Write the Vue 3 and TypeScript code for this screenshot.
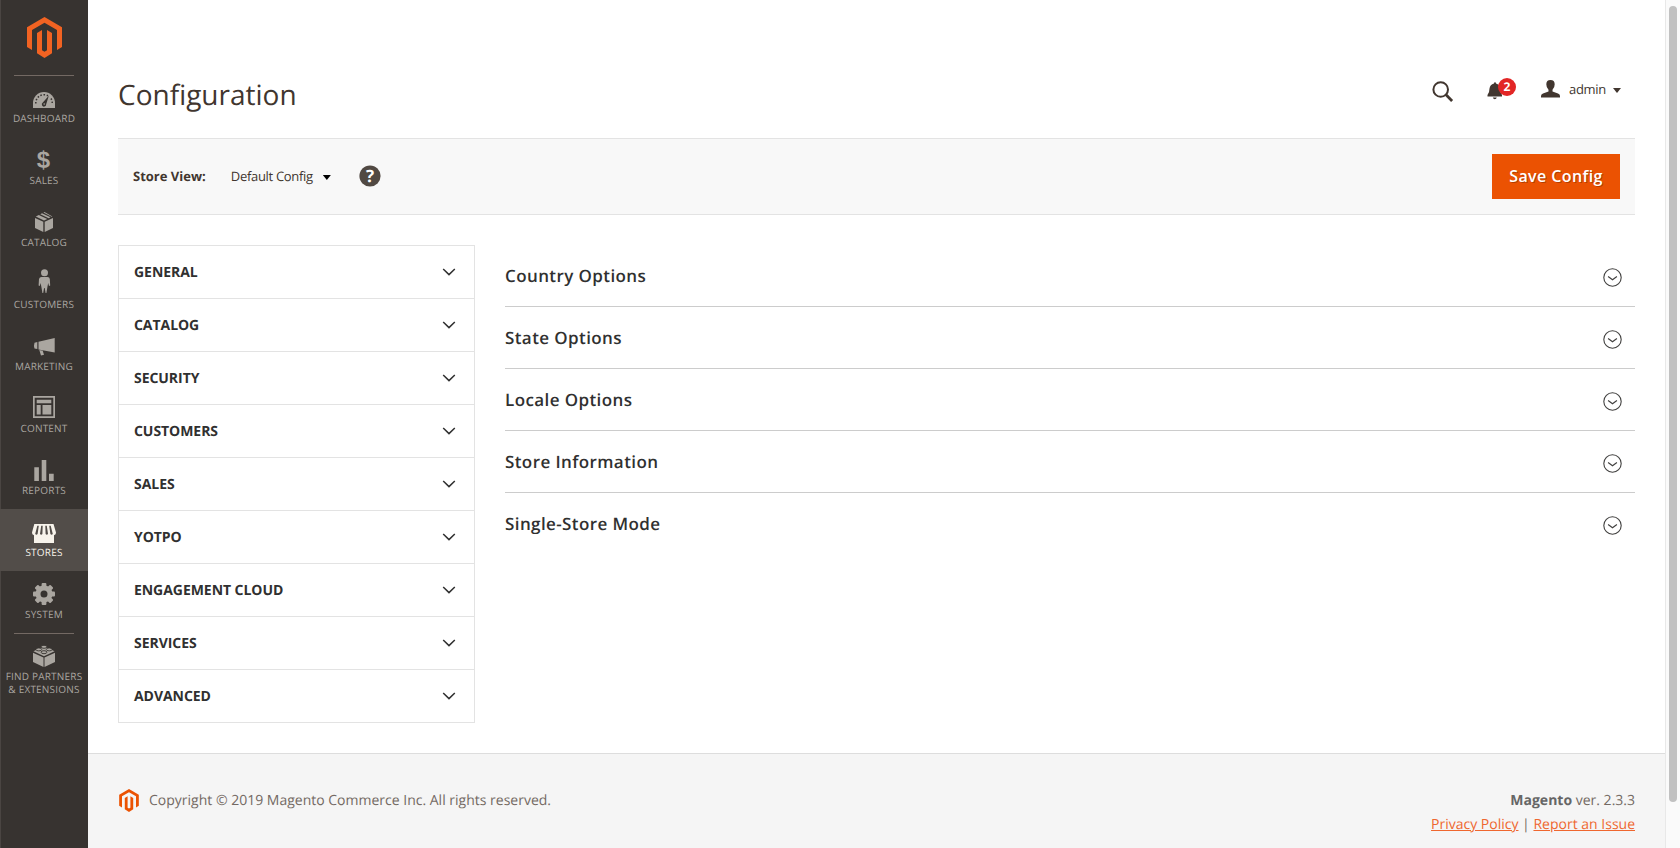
<script setup lang="ts">
interface MenuItem {
  id: string
  lines: string[]
  active?: boolean
  divided?: boolean
}

const menu: MenuItem[] = [
  { id: 'dashboard', lines: ['Dashboard'] },
  { id: 'sales', lines: ['Sales'] },
  { id: 'catalog', lines: ['Catalog'] },
  { id: 'customers', lines: ['Customers'] },
  { id: 'marketing', lines: ['Marketing'] },
  { id: 'content', lines: ['Content'] },
  { id: 'reports', lines: ['Reports'] },
  { id: 'stores', lines: ['Stores'], active: true },
  { id: 'system', lines: ['System'] },
  { id: 'partners', lines: ['Find Partners', '& Extensions'], divided: true },
]

const tabs: string[] = [
  'General', 'Catalog', 'Security', 'Customers', 'Sales',
  'Yotpo', 'Engagement Cloud', 'Services', 'Advanced',
]

const sections: string[] = [
  'Country Options', 'State Options', 'Locale Options', 'Store Information', 'Single-Store Mode',
]

const teeth: number[] = [0, 45, 90, 135, 180, 225, 270, 315]
</script>

<template>
  <div class="page">
    <aside class="sidebar">
      <a class="logo">
        <svg width="35" height="41" viewBox="0 0 35 41">
          <path fill="#f26322" d="M17.5 0 35 10.2V30l-5 3V13L17.5 5.800 5 13v20l-5-3V10.200z" />
          <path fill="#f26322" d="m10 16 5-3v20.300l2.500 1.500 2.500-1.500V13l5 3v20.300L17.500 41 10 36.300z" />
        </svg>
      </a>
      <nav class="menu">
        <a
          v-for="item in menu"
          :key="item.id"
          class="menu-item"
          :class="{ active: item.active, divided: item.divided }"
        >
          <svg class="menu-icon" width="30" height="29" viewBox="0 0 30 29" fill="currentColor">
            <template v-if="item.id === 'dashboard'">
              <path d="M4 25v-5a11 11 0 0 1 22 0v5z" />
              <path class="cut-line" d="M6.800 20.500A8.200 8.200 0 0 1 19 12.800M22 15.500A8.200 8.200 0 0 1 23.200 20.500" stroke-width="1.500" stroke-dasharray="1.500 1.700" />
              <path class="cut" d="m19.800 12.800-2.600 8.500a2.200 2.200 0 1 1-3.400-1.700z" />
              <circle cx="15.200" cy="21" r=".8" />
            </template>
            <text v-else-if="item.id === 'sales'" class="dollar" x="14.500" y="22.800" text-anchor="middle">$</text>
            <template v-else-if="item.id === 'catalog'">
              <path d="m6 11 8.300 3.700V25L6 21zM24 11l-8.300 3.700V25L24 21zM6.800 9.600l3-1.600 8.500 4-3.300 1.500zM11.300 7.200l1.700-.9 8.500 4-1.800.9zM14.400 5.600 15.500 5l7.900 4.400-.8.400z" />
            </template>
            <template v-else-if="item.id === 'customers'">
              <circle cx="15.500" cy="3.800" r="3.500" />
              <path d="M12.500 8h6q2 0 2.300 2l.4 6.500-1.200.5-.8-3-.8 4-1 6h-.8l-.9-5h-.6l-.9 5h-.8l-1-6-.8-4-.8 3-1.200-.5.4-6.500q.5-2 2.500-2z" />
            </template>
            <template v-else-if="item.id === 'marketing'">
              <path d="M9.500 10.700 25.700 7v14.500L9.500 18.500zM8.300 11v7l-2.800-.4q-1-3 0-5.900zM10.300 19l3.400.7 1.300 4-3 .8z" />
            </template>
            <template v-else-if="item.id === 'content'">
              <path fill-rule="evenodd" d="M4 3h22v22H4zm1.700 1.700v18.600h18.600V4.700z" />
              <path d="M7.700 6.700h14.600v3.500H7.700zM7.700 12h4v9.500h-4zM13.500 12h8.800v9.500h-8.800z" />
            </template>
            <path v-else-if="item.id === 'reports'" d="M5.300 12.300h4.600V26H5.300zM12.700 5h4.600v21h-4.600zM20 18.800h4.700V26H20z" />
            <template v-else-if="item.id === 'stores'">
              <path d="M5.300 7h19.200L27 15.500q.2 2.300-2 2.700V26H5v-7.800q-2.200-.4-2-2.700z" />
              <path class="awning" d="m8.300 8.800 1.500 0-1.200 8.300q-1.200 1.300-2.400 0zM12.200 8.800h1.500l-.3 8.300q-1.200 1.300-2.400 0zM16.300 8.800h1.500l1.200 8.300q-1.200 1.300-2.400 0zM20.200 8.800h1.500l2.100 8.300q-1.200 1.300-2.400 0z" />
            </template>
            <template v-else-if="item.id === 'system'">
              <rect v-for="angle in teeth" :key="angle" x="12.600" y="4" width="4.800" height="6" rx="1" :transform="`rotate(${angle} 15 15)`" />
              <circle cx="15" cy="15" r="6" fill="none" stroke="currentColor" stroke-width="5" />
            </template>
            <template v-else>
              <path d="m4 11.700 10.500 4.800V26L4 21zM26 11.700l-10.500 4.800V26L26 21z" />
              <path d="m4.500 10.200 10.500-5 10.500 5L15 15.200z" />
              <g class="stud">
                <ellipse cx="15" cy="5.800" rx="2.900" ry="1.500" />
                <ellipse cx="9.800" cy="8.400" rx="2.900" ry="1.500" />
                <ellipse cx="20.200" cy="8.400" rx="2.900" ry="1.500" />
                <ellipse cx="15" cy="11.200" rx="2.900" ry="1.500" />
              </g>
            </template>
          </svg>
          <span v-for="line in item.lines" :key="line" class="menu-label">{{ line }}</span>
        </a>
      </nav>
    </aside>

    <div class="wrapper">
      <header class="header">
        <h1>Configuration</h1>
        <div class="tools">
          <svg class="search" width="22" height="22" viewBox="0 0 22 22" fill="none" stroke="currentColor">
            <circle cx="8.700" cy="8.500" r="7.300" stroke-width="2" />
            <path d="m13.800 13.600 6.300 6.300" stroke-width="2.800" />
          </svg>
          <div class="bell">
            <svg width="16" height="18" viewBox="0 0 16 18" fill="currentColor">
              <path d="M7 1.500Q7 .2 8 .2t1 1.300q3.800 1 4 5 .1 4 2 6.500v1.500H.5V13q2-2.500 2-6.500.5-4 4.500-5zM5.800 15.500h4q-.5 1.800-2 1.800t-2-1.800z" />
            </svg>
            <span class="badge">2</span>
          </div>
          <div class="account">
            <svg width="19" height="18" viewBox="0 0 19 18" fill="currentColor">
              <path d="M9.500 0q4.200 0 4.200 4.300 0 3.500-2.200 5.400v1.800l5.500 2q2 .8 2 2.500v1.500H0V16q0-1.700 2-2.500l5.500-2V9.700Q5.300 7.800 5.300 4.300 5.300 0 9.500 0z" />
            </svg>
            <span>admin</span>
            <i class="caret" />
          </div>
        </div>
      </header>

      <div class="toolbar">
        <strong>Store View:</strong>
        <span class="scope">Default Config</span>
        <i class="caret dark" />
        <svg class="help" width="22" height="22" viewBox="0 0 22 22">
          <circle cx="11" cy="11" r="10.600" fill="#514943" />
          <text x="11" y="17.200" text-anchor="middle" fill="#fff">?</text>
        </svg>
        <button type="button">Save Config</button>
      </div>

      <main class="columns">
        <ul class="tabs">
          <li v-for="tab in tabs" :key="tab">
            <span>{{ tab }}</span>
            <svg width="14" height="8" viewBox="0 0 14 8" fill="none" stroke="#303030" stroke-width="1.500">
              <path d="m1.200 1 5.800 5.600L12.800 1" />
            </svg>
          </li>
        </ul>
        <div class="sections">
          <section v-for="name in sections" :key="name">
            <h2>{{ name }}</h2>
            <svg width="19" height="19" viewBox="0 0 19 19" fill="none" stroke="#41403f">
              <circle cx="9.500" cy="9.500" r="8.700" stroke-width="1.100" />
              <path d="m5.100 8.500 4.400 3.200 4.400-3.200" stroke-width="1.200" />
            </svg>
          </section>
        </div>
      </main>

      <footer class="footer">
        <p class="copyright">
          <svg width="20" height="23" viewBox="0 0 35 41" fill="#eb5202">
            <path d="M17.500 0 35 10.200V30l-5 3V13L17.500 5.800 5 13v20l-5-3V10.200z" />
            <path d="m10 16 5-3v20.300l2.500 1.500 2.500-1.500V13l5 3v20.300L17.500 41 10 36.300z" />
          </svg>
          <span>Copyright © 2019 Magento Commerce Inc. All rights reserved.</span>
        </p>
        <div class="legal">
          <p><strong>Magento</strong> ver. 2.3.3</p>
          <p><a>Privacy Policy</a> | <a>Report an Issue</a></p>
        </div>
      </footer>
    </div>

    <div class="scrollbar"><div class="thumb" /></div>
  </div>
</template>

<style>
body {
  margin: 0;
  overflow: hidden;
}
</style>

<style scoped>
* {
  box-sizing: border-box;
}
.page {
  display: flex;
  height: 848px;
  background: #fff;
  color: #41362f;
  font-family: "Open Sans", "Noto Sans", sans-serif;
  text-rendering: geometricPrecision;
  font-kerning: normal;
  overflow: hidden;
}
svg {
  display: block;
  flex: none;
}
h1, h2, p, ul {
  margin: 0;
  padding: 0;
}
.sidebar {
  width: 88px;
  flex: none;
  background: #373330;
  border-left: 1px solid #4a4542;
}
.logo {
  display: flex;
  height: 75px;
  padding: 17px 0 0 26px;
}
.menu {
  margin-left: -1px;
}
.menu-item {
  display: flex;
  flex-direction: column;
  align-items: center;
  position: relative;
  height: 62px;
  padding-top: 8px;
  color: #aaa6a0;
}
.menu-item:first-child::before,
.divided::before {
  content: "";
  position: absolute;
  top: 0;
  left: 14px;
  width: 60px;
  height: 1px;
  background: #736963;
}
.menu-item.active {
  background: #524d49;
  color: #f7f3eb;
}
.menu-label {
  font-size: 10px;
  line-height: 13px;
  letter-spacing: 0.2px;
  text-transform: uppercase;
  white-space: nowrap;
}
.active .menu-label {
  font-weight: 500;
}
.cut {
  fill: #373330;
}
.awning {
  fill: #524d49;
}
.cut-line {
  fill: none;
  stroke: #373330;
}
.stud {
  stroke: #373330;
  stroke-width: 0.9;
}
.dollar {
  font: bold 24px "Liberation Sans", sans-serif;
}
.wrapper {
  flex: 1;
  min-width: 0;
  display: flex;
  flex-direction: column;
}
.header {
  display: flex;
  justify-content: space-between;
  height: 138px;
  padding: 76px 44px 0 30px;
}
h1 {
  font-size: 28px;
  font-weight: 400;
  line-height: 38px;
}
.tools {
  display: flex;
  align-items: flex-start;
  padding-top: 3px;
}
.search {
  margin: 2px 33px 0 0;
}
.bell {
  position: relative;
  margin: 3px 38px 0 0;
}
.badge {
  position: absolute;
  left: 11px;
  top: -4px;
  width: 18px;
  height: 18px;
  border-radius: 50%;
  background: #e22626;
  color: #fff;
  font-size: 12px;
  font-weight: 700;
  line-height: 18px;
  text-align: center;
}
.account {
  display: flex;
  align-items: flex-start;
  margin-top: 1px;
  font-size: 13px;
  line-height: 18px;
}
.account span {
  margin: 0 7px 0 9px;
  letter-spacing: -0.3px;
}
.caret {
  width: 8px;
  height: 5px;
  background: #41362f;
  clip-path: polygon(0 0, 100% 0, 50% 100%);
}
.account .caret {
  margin-top: 8px;
}
.caret.dark {
  background: #000;
  margin: 2px 28px 0 10px;
}
.toolbar {
  display: flex;
  align-items: center;
  height: 77px;
  margin: 0 30px;
  padding: 0 15px;
  background: #f8f8f8;
  border: solid #e3e3e3;
  border-width: 1px 0;
  font-size: 13px;
}
.toolbar strong,
.scope {
  padding-bottom: 1px;
}
.scope {
  margin-left: 25px;
  letter-spacing: -0.3px;
}
.help {
  margin-bottom: 1px;
}
.help text {
  font: bold 17px "Open Sans", sans-serif;
}
button {
  width: 128px;
  height: 45px;
  margin-left: auto;
  padding: 0 0 1px;
  border: 0;
  background: #eb5202;
  color: #fff;
  font: 600 16px "Open Sans", sans-serif;
  letter-spacing: 0.4px;
  text-shadow: 1px 1px 0 rgba(0, 0, 0, 0.25);
}
.columns {
  display: flex;
  gap: 30px;
  height: 538px;
  padding: 30px 30px 0;
}
.tabs {
  width: 357px;
  height: 478px;
  border: 1px solid #e3e3e3;
  list-style: none;
}
.tabs li {
  display: flex;
  align-items: center;
  justify-content: space-between;
  height: 53px;
  padding: 0 18px 0 15px;
  border-bottom: 1px solid #e3e3e3;
  color: #303030;
  font-size: 14px;
  font-weight: 700;
  letter-spacing: -0.05px;
  text-transform: uppercase;
}
.tabs li:last-child {
  height: 52px;
  border-bottom: 0;
}
.sections {
  flex: 1;
}
section {
  display: flex;
  justify-content: space-between;
  height: 62px;
  padding: 19px 13px 0 0;
  border-bottom: 1px solid #ccc;
}
section:last-child {
  border-bottom: 0;
}
h2 {
  color: #303030;
  font-size: 17px;
  font-weight: 600;
  line-height: 23px;
  letter-spacing: 0.4px;
}
section svg {
  margin-top: 4px;
}
.footer {
  display: flex;
  justify-content: space-between;
  flex: 1;
  padding: 35px 30px 0;
  background: #f5f5f5;
  border-top: 1px solid #ddd;
  color: #736963;
  font-size: 14px;
  line-height: 24px;
}
.copyright {
  display: flex;
  gap: 10px;
}
.copyright svg {
  margin-left: 1px;
}
.legal {
  text-align: right;
}
.legal strong {
  color: #666;
}
.legal a {
  color: #ef672f;
  text-decoration: underline;
}
.scrollbar {
  width: 15px;
  flex: none;
  padding: 6px 0 0 3px;
  background: #fafafa;
  border-left: 1px solid #e8e8e8;
}
.thumb {
  width: 8px;
  height: 796px;
  border-radius: 4px;
  background: #c1c1c1;
}
</style>
